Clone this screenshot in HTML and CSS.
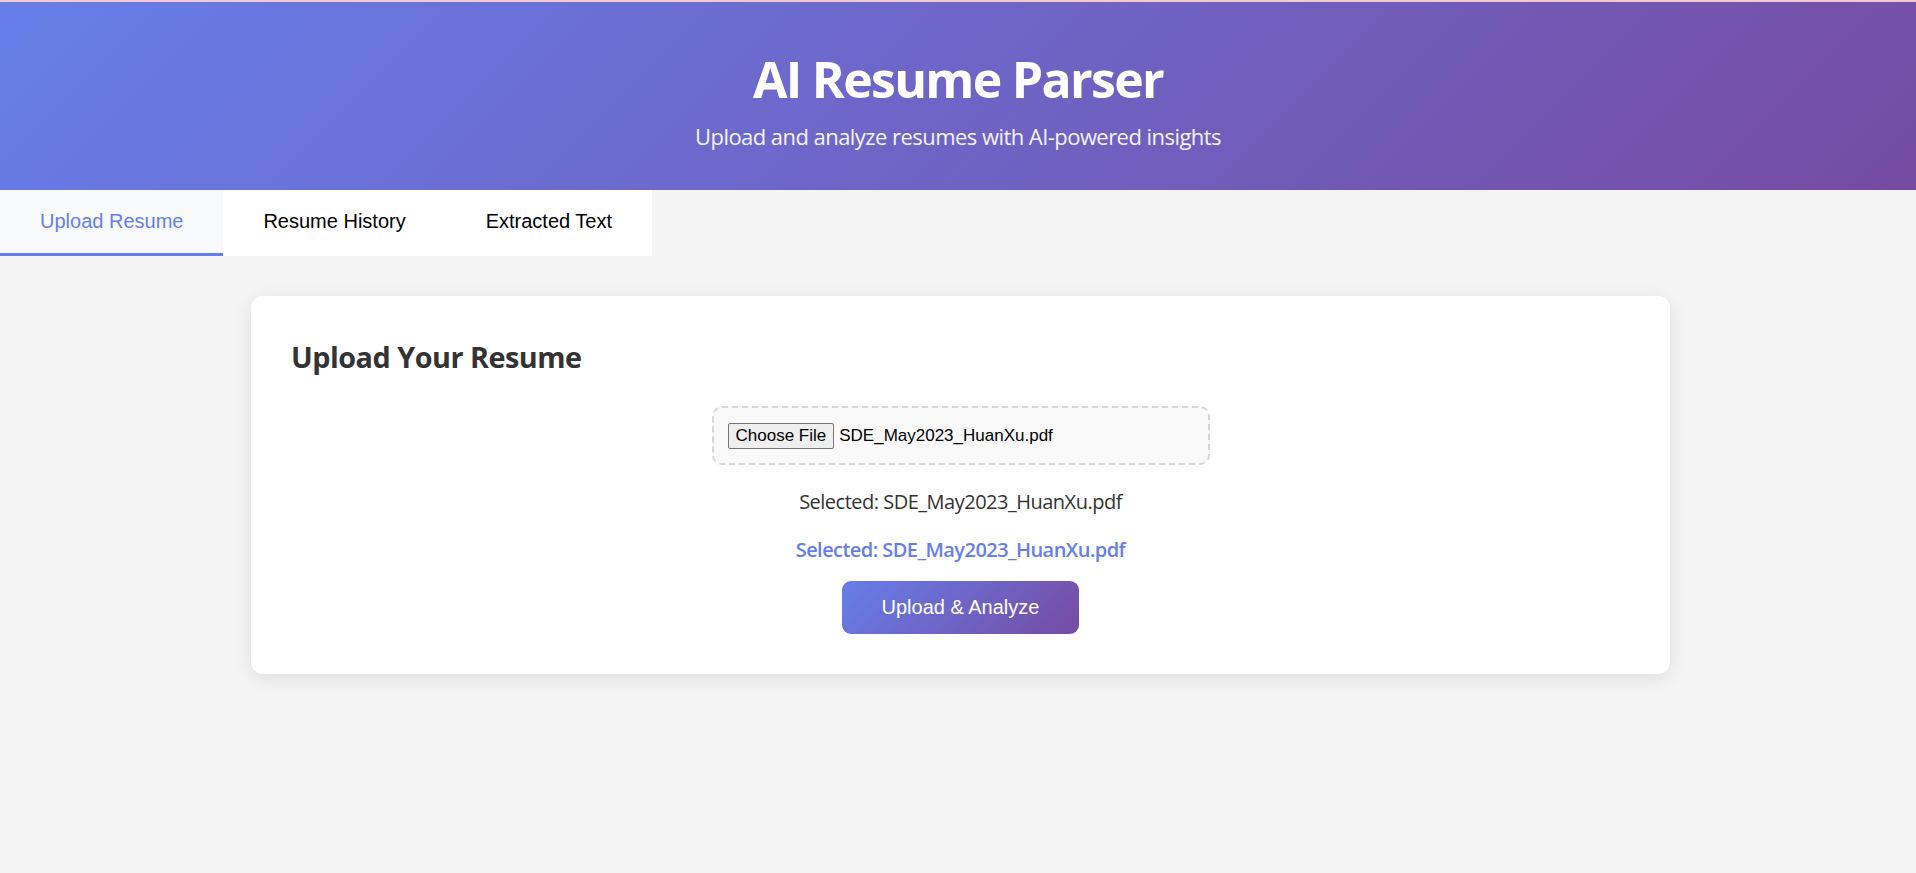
FILE: index.html
```html
<!DOCTYPE html>
<html lang="en">
<head>
<meta charset="utf-8">
<title>AI Resume Parser</title>
<link rel="stylesheet" href="styles.css">
</head>
<body>
<header class="hero">
  <h1 class="hero-title">AI Resume Parser</h1>
  <p class="hero-sub">Upload and analyze resumes with AI-powered insights</p>
</header>
<nav class="tabs">
  <div class="tab tab-active">Upload Resume</div>
  <div class="tab">Resume History</div>
  <div class="tab">Extracted Text</div>
</nav>
<main class="main">
  <section class="card">
    <h2 class="card-title">Upload Your Resume</h2>
    <div class="upload">
      <div class="file-box">
        <span class="file-btn">Choose File</span>
        <span class="file-name">SDE_May2023_HuanXu.pdf</span>
      </div>
      <p class="selected">Selected: SDE_May2023_HuanXu.pdf</p>
      <p class="selected-strong">Selected: SDE_May2023_HuanXu.pdf</p>
      <button class="upload-btn" type="button">Upload &amp; Analyze</button>
    </div>
  </section>
</main>
</body>
</html>
```
FILE: styles.css
```css
html, body {
  margin: 0;
  padding: 0;
}
body {
  background: #f4f4f4;
  font-family: "Open Sans", "Noto Sans", sans-serif;
  color: #333;
  border-top: 2px solid #f2c9cf;
  min-height: 870px;
}
.hero {
  background: linear-gradient(135deg, #667eea 0%, #764ba2 100%);
  color: #fff;
  text-align: center;
  height: 188px;
  box-sizing: border-box;
  padding-top: 43px;
}
.hero-title {
  margin: 0;
  font-size: 50px;
  font-weight: 700;
  line-height: 68px;
  letter-spacing: -1.7px;
}
.hero-sub {
  margin: 8px 0 0;
  font-size: 22px;
  line-height: 30px;
  opacity: 0.92;
  letter-spacing: -0.55px;
}
.tabs {
  display: flex;
  width: fit-content;
  background: #fff;
}
.tab {
  font-family: "Liberation Sans", Arial, sans-serif;
  font-size: 20px;
  line-height: 26px;
  padding: 18px 40px 19px;
  border-bottom: 3px solid transparent;
  color: #000;
}
.tab-active {
  background: #f8f9fa;
  color: #667eea;
  border-bottom-color: #667eea;
}
.main {
  padding: 40px 0 0 251px;
}
.card {
  width: 1419px;
  box-sizing: border-box;
  height: 378px;
  background: #fff;
  border-radius: 12px;
  box-shadow: 0 4px 18px rgba(0, 0, 0, 0.09);
  padding: 40px;
}
.card-title {
  margin: 0 0 28px;
  font-size: 28.8px;
  line-height: 42px;
  font-weight: 700;
  color: #333;
  letter-spacing: -0.5px;
}
.upload {
  display: flex;
  flex-direction: column;
  align-items: center;
}
.file-box {
  width: 498px;
  height: 59px;
  box-sizing: border-box;
  border: 2px dashed #d6d6d6;
  border-radius: 10px;
  background: #f9f9f9;
  display: flex;
  align-items: center;
  padding-left: 14px;
}
.file-btn {
  font-family: "Liberation Sans", Arial, sans-serif;
  font-size: 17px;
  color: #000;
  background: #efefef;
  border: 1px solid #767676;
  border-radius: 2px;
  height: 26px;
  box-sizing: border-box;
  padding: 0 7px;
  line-height: 24px;
}
.file-name {
  font-family: "Liberation Sans", Arial, sans-serif;
  font-size: 17px;
  color: #000;
  margin-left: 5px;
}
.selected {
  margin: 23px 0 0;
  font-size: 20px;
  line-height: 28px;
  color: #333;
  letter-spacing: -0.5px;
}
.selected-strong {
  margin: 20px 0 0;
  font-size: 20px;
  line-height: 28px;
  font-weight: 600;
  color: #667eea;
  letter-spacing: -0.55px;
}
.upload-btn {
  margin-top: 17px;
  font-family: "Liberation Sans", Arial, sans-serif;
  font-size: 20px;
  line-height: 21px;
  color: #fff;
  background: linear-gradient(135deg, #667eea 0%, #764ba2 100%);
  border: none;
  border-radius: 9px;
  padding: 16px 40px;
  cursor: pointer;
}
```
